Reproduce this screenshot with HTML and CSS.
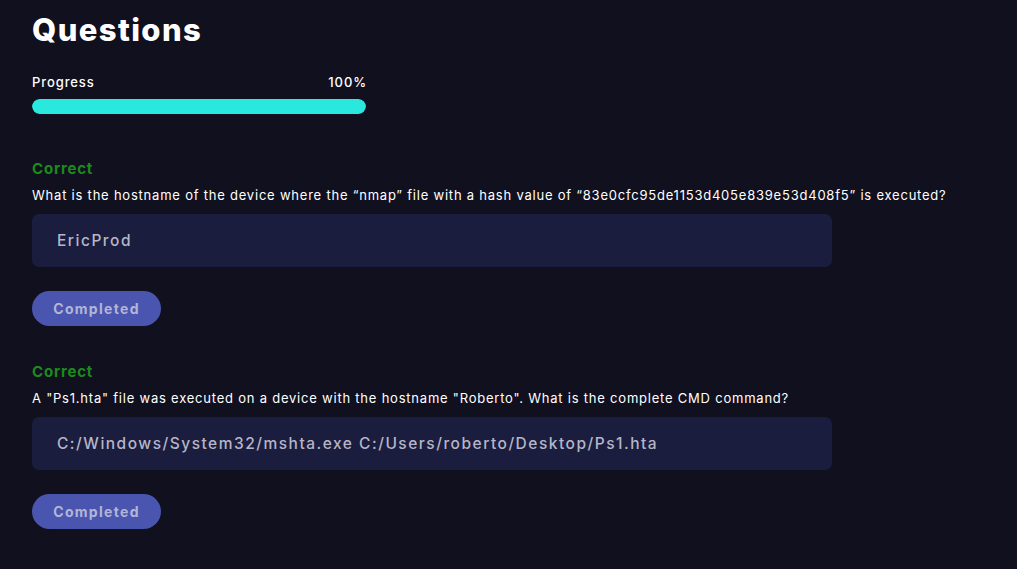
FILE: index.html
```html
<!DOCTYPE html>
<html>
<head>
<meta charset="utf-8">
<link rel="stylesheet" href="styles.css">
</head>
<body>
<main class="page">
  <h1 class="title">Questions</h1>
  <section class="progress">
    <div class="progress-labels"><span>Progress</span><span class="pct">100%</span></div>
    <div class="progress-track"><div class="progress-fill" style="width:100%"></div></div>
  </section>
  <section class="question">
    <div class="status">Correct</div>
    <p class="qtext">What is the hostname of the device where the “nmap” file with a hash value of “83e0cfc95de1153d405e839e53d408f5” is executed?</p>
    <div class="answer">EricProd</div>
    <button class="btn">Completed</button>
  </section>
  <section class="question">
    <div class="status">Correct</div>
    <p class="qtext">A "Ps1.hta" file was executed on a device with the hostname "Roberto". What is the complete CMD command?</p>
    <div class="answer">C:/Windows/System32/mshta.exe C:/Users/roberto/Desktop/Ps1.hta</div>
    <button class="btn">Completed</button>
  </section>
</main>
</body>
</html>
```
FILE: styles.css
```css
html, body {
  margin: 0;
  padding: 0;
  background: #11101f;
  height: 100%;
}
body {
  font-family: Inter, "Open Sans", sans-serif;
  color: #ffffff;
}
.page {
  padding: 10px 32px 0 32px;
  display: flex;
  flex-direction: column;
}
.title {
  margin: 0;
  font-size: 31px;
  font-weight: 800;
  line-height: 40px;
  letter-spacing: 1.4px;
}
.progress {
  margin-top: 24px;
  width: 334px;
}
.progress-labels {
  display: flex;
  justify-content: space-between;
  font-size: 13px;
  font-weight: 500;
  line-height: 16px;
  letter-spacing: 0.9px;
}
.pct {
  margin-right: -1px;
}
.progress-track {
  margin-top: 9px;
  height: 15px;
  border-radius: 8px;
  background: #1b1d3f;
  overflow: hidden;
}
.progress-fill {
  height: 100%;
  background: #29e8dd;
  border-radius: 8px;
}
.question {
  margin-top: 45px;
  display: flex;
  flex-direction: column;
  align-items: flex-start;
}
.question + .question {
  margin-top: 36px;
}
.status {
  color: #1c8a1c;
  font-size: 15px;
  font-weight: 700;
  line-height: 20px;
  letter-spacing: 0.8px;
}
.qtext {
  margin: 8px 0 0 0;
  font-size: 13px;
  line-height: 16px;
  letter-spacing: 0.78px;
}
.answer {
  margin-top: 11px;
  width: 800px;
  height: 53px;
  box-sizing: border-box;
  padding: 0 25px;
  display: flex;
  align-items: center;
  background: #1b1d3f;
  border-radius: 7px;
  color: #b6b6c6;
  font-size: 15.5px;
  font-weight: 500;
  letter-spacing: 1.5px;
}
.btn {
  margin-top: 24px;
  width: 129px;
  height: 35px;
  border: none;
  border-radius: 18px;
  background: #4a55b0;
  color: #b3b5d6;
  font-family: inherit;
  font-size: 14px;
  font-weight: 700;
  letter-spacing: 1.3px;
  padding: 0;
}
```
